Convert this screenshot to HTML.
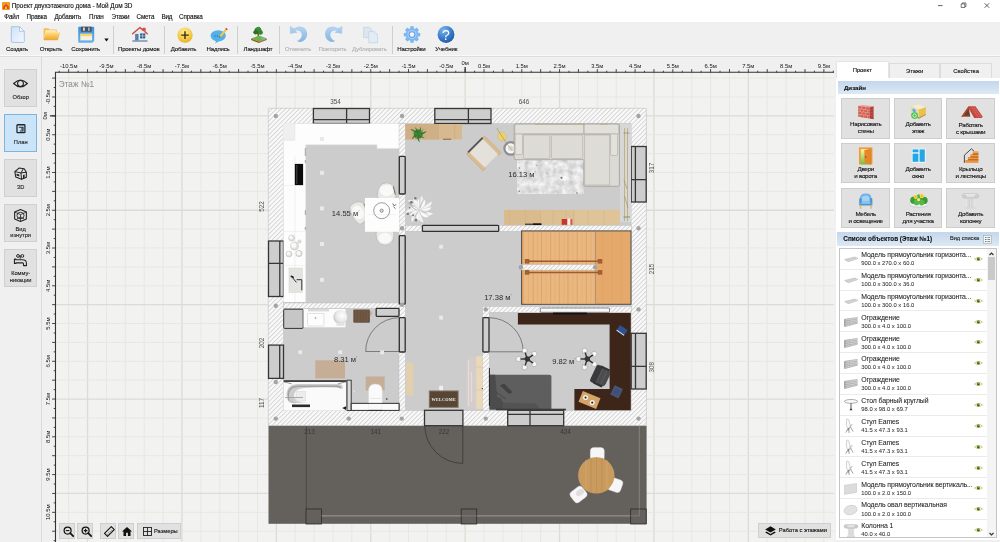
<!DOCTYPE html>
<html lang="ru"><head><meta charset="utf-8"><title>Проект двухэтажного дома - Мой Дом 3D</title>
<style>
*{box-sizing:border-box;margin:0;padding:0}
html,body{width:1000px;height:542px;overflow:hidden;background:#f0f0f0}
body{font-family:"Liberation Sans",sans-serif;color:#1a1a1a;-webkit-text-stroke:0.12px currentColor}
#app{position:relative;width:1000px;height:542px;overflow:hidden;background:transparent;will-change:transform}
#title{position:absolute;left:0;top:0;width:1000px;height:11px;background:#fff}
#title .tt{position:absolute;left:11.8px;top:1.6px;font-size:6.4px;letter-spacing:-0.04px;line-height:8px;color:#111;white-space:nowrap}
#title svg{position:absolute}
#menu{position:absolute;left:0;top:11px;width:1000px;height:11px;background:#fff}
#menu span{position:absolute;top:1.6px;font-size:6.3px;letter-spacing:-0.14px;line-height:8px;color:#111;white-space:nowrap}
#tb{position:absolute;left:0;top:22px;width:1000px;height:35px;background:#f0f0f0}
#tb .ln1{position:absolute;left:0;top:33.4px;width:1000px;height:1px;background:#f9f9f9}
#tb .ln2{position:absolute;left:0;top:34.4px;width:1000px;height:1.2px;background:#dedede}
.tbi{position:absolute;top:0;height:34px;width:0}
.tbi svg{position:absolute;top:3.5px;left:-11px;width:22px;height:19px;overflow:visible}
.tbi span{position:absolute;top:23.3px;left:-30px;width:60px;text-align:center;font-size:6.1px;letter-spacing:-0.17px;line-height:8px;color:#111;white-space:nowrap}
.tbi.dis span{color:#b4b4b4}
.sep{position:absolute;top:3.5px;width:1px;height:28px;background:#cfcfcf}
#left{position:absolute;left:0;top:57px;width:42px;height:485px;background:#f0f0f0;border-right:1px solid #dadada}
.lb{position:absolute;left:4.2px;width:32.7px;height:38.4px;background:#e1e1e1;border:1px solid #d0d0d0}
.lb.on{background:#cce4f7;border-color:#7ab5e3}
.lb svg{position:absolute;left:8.9px;top:7.1px;width:13px;height:13px;overflow:visible}
.lb span{position:absolute;left:-5px;width:41px;text-align:center;font-size:5.7px;line-height:6.6px;color:#222;white-space:nowrap}
.ovb{position:absolute;background:#e1e1e1;border:1px solid #cfcfcf;height:16px}
.ovb svg{position:absolute;overflow:visible}
#right{position:absolute;left:836px;top:57px;width:164px;height:485px;background:#f0f0f0}
.tab{position:absolute;font-size:5.9px;letter-spacing:-0.03px;line-height:8px;text-align:center;color:#111;background:#f0f0f0;border:1px solid #dcdcdc;border-bottom:none}
.tab.on{background:#fff;border-color:#e4e4e4}
#rp{position:absolute;left:0;top:21px;width:164px;height:461.500px;background:#fff}
.hd{position:absolute;left:1.5px;width:161.5px;height:13px;background:linear-gradient(#c3d7ec,#dde8f4);font-weight:bold;font-size:6.15px;line-height:13px;padding-left:6.3px;color:#111;white-space:nowrap}
.db{position:absolute;width:48.6px;height:40.6px;background:#e1e1e1;border:1px solid #cdcdcd}
.db svg{position:absolute;left:14.3px;top:3.5px;width:19px;height:17px;overflow:visible}
.db span{position:absolute;left:-6px;top:22.4px;width:59px;text-align:center;font-size:6.25px;letter-spacing:-0.3px;line-height:6.9px;color:#111;white-space:nowrap}
#list{position:absolute;left:839.3px;top:247.800px;width:157.500px;height:290.600px;background:#fff;border:1px solid #c4c4c4;overflow:hidden}
.it{-webkit-text-stroke:0.06px currentColor;position:relative;height:20.87px;border-bottom:1px solid #ebebeb;width:147px}
.it .t1{position:absolute;left:21px;top:2.3px;font-size:6.9px;letter-spacing:-0.1px;line-height:8px;color:#222;white-space:nowrap}
.it .t2{position:absolute;left:21px;top:10.4px;font-size:5.85px;line-height:8px;color:#333;white-space:nowrap}
.it .th{position:absolute;left:2.5px;top:2.5px;width:16px;height:16px}
.it .th svg{position:absolute;left:0;top:0;width:16px;height:16px;overflow:visible}
.it .ey{position:absolute;left:133.7px;top:6.2px;width:9px;height:8px}
.it .ey svg{position:absolute;left:0;top:0;width:9px;height:8px;overflow:visible}
#sb{position:absolute;left:987.3px;top:248.800px;width:8.700px;height:288.600px;background:#f4f4f4}
#sb i{position:absolute;left:0.4px;width:7.8px;background:#c9c9c9}

</style></head>
<body>
<div id="app">
<div id="title">
<svg style="left:1.5px;top:1.5px" width="8" height="8" viewBox="0 0 8 8"><rect width="8" height="8" rx="1" fill="#f29a1f"/><path d="M1.3 4.6L4 2l2.7 2.6v2.3H1.3z" fill="#d8432a"/><path d="M3.1 6.9V4.6h1.8v2.3z" fill="#f7c948"/></svg>
<div class="tt">Проект двухэтажного дома - Мой Дом 3D</div>
<svg style="left:930px;top:0" width="70" height="11" viewBox="0 0 70 11"><path d="M8 5.6h4.6" stroke="#222" stroke-width="0.7" fill="none"/><path d="M31.2 3.9h3.6v3.6h-3.6zM32.3 3.9v-1h3.6v3.6h-1.1" stroke="#222" stroke-width="0.6" fill="none"/><path d="M54.6 3.2l4.6 4.6M59.2 3.2l-4.6 4.6" stroke="#222" stroke-width="0.7" fill="none"/></svg>
</div>
<div id="menu">
<span style="left:4.300px">Файл</span><span style="left:26.500px">Правка</span><span style="left:54.400px">Добавить</span><span style="left:89px">План</span><span style="left:111.500px">Этажи</span><span style="left:136.500px">Смета</span><span style="left:161.400px">Вид</span><span style="left:179px">Справка</span>
</div>
<div id="tb">
<div class="tbi" style="left:17.1px"><svg viewBox="0 0 22 19" style="left:-10.5px"><defs><linearGradient id="gnew" x1="0" y1="0" x2="1" y2="1"><stop offset="0" stop-color="#cfe0f7"/><stop offset="1" stop-color="#f6faff"/></linearGradient></defs><g transform="translate(-0.300 -0.900)"><path d="M4.6 1.6h8.2l4.8 4.6v10.3q0 .8-.8.8H5.4q-.8 0-.8-.8z" fill="url(#gnew)" stroke="#a3c0e4" stroke-width="0.9"/><path d="M12.8 1.6v4.6h4.8z" fill="#fff" stroke="#9dbbe2" stroke-width="0.8"/></g></svg><span>Создать</span></div>
<div class="tbi" style="left:51.0px"><svg viewBox="0 0 22 19" style="left:-10.0px"><defs><linearGradient id="gop" x1="0" y1="0" x2="0" y2="1"><stop offset="0" stop-color="#fde08a"/><stop offset="1" stop-color="#f0a32a"/></linearGradient></defs><g transform="translate(-0.300 -0.400)"><path d="M2.9 3.4q0-.8.8-.8h4l1.2 1.3h6.300q.8 0 .8.800v2.300H4.500L2.900 14z" fill="#f4bf55"/><path d="M4.600 4.600h10.600v3H4.600z" fill="#fbe9b5"/><path d="M5.400 6.600h13.400q.9 0 .6.900l-2 6.400q-.2.700-1 .7H3.500q-.9 0-.6-.9l1.800-6.400q.2-.7.700-.7z" fill="url(#gop)"/></g></svg><span>Открыть</span></div>
<div class="tbi" style="left:85.7px"><svg viewBox="0 0 22 19" style="left:-10.3px"><defs><linearGradient id="gsv" x1="0" y1="0" x2="0" y2="1"><stop offset="0" stop-color="#3f8fdb"/><stop offset="1" stop-color="#6db0ea"/></linearGradient></defs><g transform="translate(0.700 -0.200)"><path d="M3.400 0.900h14.200q.900 0 .9.900v13.300l-1.800 1.800H3.400q-.9 0-.9-.9V1.800q0-.9.900-.9z" fill="url(#gsv)"/><rect x="5.300" y="0.900" width="10.600" height="5" fill="#4a4f58"/><rect x="7.200" y="1.700" width="2" height="3.300" fill="#c9d4e2"/><rect x="12.400" y="1.700" width="1.600" height="3.300" fill="#aab8cc"/><rect x="4.600" y="8" width="11.800" height="6.600" fill="#f4f1e4"/><rect x="4.600" y="8" width="11.800" height="2.300" fill="#f7d768"/></g></svg><span>Сохранить</span></div>
<svg style="position:absolute;left:103.7px;top:15.5px" width="5" height="4" viewBox="0 0 5 4"><path d="M0.3 0.4h4.4L2.5 3.6z" fill="#111"/></svg>
<div class="sep" style="left:113px"></div>
<div class="tbi" style="left:138.8px"><svg viewBox="0 0 22 19" style="left:-10.0px"><g transform="translate(0.600 -0.500) scale(0.940)"><path d="M4.700 8L11 2.600l6.700 5.400v7.900H4.700z" fill="#e6ebf1"/><path d="M3.200 8.800L11 2.100l3.600 3.100V3.200h1.700v3.500l2.500 2.100" fill="none" stroke="#d6493b" stroke-width="1.600" stroke-linejoin="round" stroke-linecap="round"/><rect x="5.900" y="9" width="3.600" height="6.900" fill="#5a7da3"/><rect x="11.200" y="8.500" width="5.400" height="5.200" fill="#1f5b8e"/><path d="M13.900 8.500v5.200M11.200 11.100h5.400" stroke="#d6e6f3" stroke-width="0.700"/><rect x="2.900" y="15.800" width="16.200" height="1.400" fill="#6985a6"/></g></svg><span>Проекты домов</span></div>
<div class="sep" style="left:164.3px"></div>
<div class="tbi" style="left:183.5px"><svg viewBox="0 0 22 19" style="left:-10.0px"><defs><radialGradient id="gad" cx="0.450" cy="0.300" r="0.800"><stop offset="0" stop-color="#fdeb93"/><stop offset="0.600" stop-color="#f6c940"/><stop offset="1" stop-color="#e09a1c"/></radialGradient></defs><circle cx="11" cy="9.100" r="7.700" fill="url(#gad)"/><path d="M11 5.300v7.600M7.200 9.100h7.600" stroke="#3a2c10" stroke-width="1.400"/></svg><span>Добавить</span></div>
<div class="tbi" style="left:218.1px"><svg viewBox="0 0 22 19" style="left:-10.6px"><ellipse cx="10.200" cy="9.800" rx="7.600" ry="5.600" fill="#51b1e9"/><path d="M8.200 14.400l-1 3 4.400-2.600z" fill="#51b1e9"/><circle cx="7" cy="10" r="0.700" fill="#2d6fa3"/><circle cx="9.400" cy="10" r="0.700" fill="#2d6fa3"/><path d="M11.200 11.700l.7-2.400 5.300-6.400 1.700 1.400-5.400 6.400z" fill="#f5c54a"/><path d="M17.200 2.900l.9-1.100 1.700 1.400-.9 1.100z" fill="#d8393a"/><path d="M11.200 11.700l.5-1.600 1 .9z" fill="#333"/></svg><span>Надпись</span></div>
<div class="sep" style="left:237.2px"></div>
<div class="tbi" style="left:258.0px"><svg viewBox="0 0 22 19" style="left:-10.5px"><g transform="translate(0 0.200) scale(1 0.930)"><circle cx="10" cy="5" r="3.600" fill="#2f7d2b"/><circle cx="7.600" cy="6.600" r="2.300" fill="#2a7127"/><circle cx="12.500" cy="6.800" r="2.400" fill="#37872f"/><circle cx="10.400" cy="2.900" r="2.300" fill="#3c8f35"/><rect x="9.600" y="8" width="1.300" height="4.400" fill="#6b4423"/><path d="M3.200 13.300L11 10.100l7.800 3.200L11 16.500z" fill="#6fb43f"/><path d="M3.200 13.300L11 16.500v1.600L3.200 14.900z" fill="#8a5a2b"/><path d="M18.800 13.300L11 16.500v1.600l7.800-3.200z" fill="#a86f36"/><ellipse cx="14.800" cy="13.200" rx="2" ry="1" fill="#5fb8ea"/></g></svg><span>Ландшафт</span></div>
<div class="sep" style="left:279px"></div>
<div class="tbi dis" style="left:298.0px"><svg viewBox="0 0 22 19" style="left:-10.0px"><defs><linearGradient id="gun" x1="0" y1="0" x2="0" y2="1"><stop offset="0" stop-color="#b9d6f3"/><stop offset="1" stop-color="#86b4e2"/></linearGradient></defs><g transform="translate(-1 -1.800) scale(1.100)"><path d="M2.500 1.300l.3 7.300 7-1.100-2.300-1.600c3.300-1 6 1 6 4 0 2.800-2 4.600-4.300 5.300 1.500.9 3.400 1.300 5.200.300 3.700-2.100 4.800-6.400 3.200-9.800C15.800 2 11.200.800 6.600 3.600z" fill="url(#gun)"/></g></svg><span>Отменить</span></div>
<div class="tbi dis" style="left:332.5px"><svg viewBox="0 0 22 19" style="left:-10.0px"><g transform="translate(21.200 0) scale(-1 1) translate(-1 -1.800) scale(1.100)"><path d="M2.500 1.300l.3 7.300 7-1.100-2.300-1.600c3.300-1 6 1 6 4 0 2.800-2 4.600-4.300 5.300 1.500.9 3.400 1.300 5.200.300 3.700-2.100 4.800-6.400 3.200-9.800C15.800 2 11.200.800 6.600 3.600z" fill="url(#gun)"/></g></svg><span>Повторить</span></div>
<div class="tbi dis" style="left:369.4px"><svg viewBox="0 0 22 19" style="left:-9.8px"><path d="M3.600 1.300h5.800l2.500 2.400v7.900H3.600z" fill="#dbe6f2" stroke="#c0d2e6" stroke-width="0.700"/><path d="M8.800 5.600h5.800l2.900 2.800v8.400H8.800z" fill="#e3ecf5" stroke="#bfd1e6" stroke-width="0.700"/><path d="M14.600 5.600v2.800h2.900z" fill="#f5f8fc" stroke="#bfd1e6" stroke-width="0.500"/></svg><span>Дублировать</span></div>
<div class="sep" style="left:391.8px"></div>
<div class="tbi" style="left:411.4px"><svg viewBox="0 0 22 19" style="left:-10.4px"><g transform="translate(0 -0.700)"><g transform="translate(11 9.300)"><path d="M6.02 -1.86L8.23 -1.67L8.23 1.67L6.02 1.86L5.57 2.94L7.00 4.64L4.64 7.00L2.94 5.57L1.86 6.02L1.67 8.23L-1.67 8.23L-1.86 6.02L-2.94 5.57L-4.64 7.00L-7.00 4.64L-5.57 2.94L-6.02 1.86L-8.23 1.67L-8.23 -1.67L-6.02 -1.86L-5.57 -2.94L-7.00 -4.64L-4.64 -7.00L-2.94 -5.57L-1.86 -6.02L-1.67 -8.23L1.67 -8.23L1.86 -6.02L2.94 -5.57L4.64 -7.00L7.00 -4.64L5.57 -2.94z" fill="#7db7f0"/><circle r="4.600" fill="#a7d0f6"/><circle r="3.400" fill="#5f9fe3"/><circle r="2.300" fill="#f2f6fb"/></g></g></svg><span>Настройки</span></div>
<div class="tbi" style="left:446.2px"><svg viewBox="0 0 22 19" style="left:-10.9px"><defs><radialGradient id="ghl" cx="0.350" cy="0.250" r="0.900"><stop offset="0" stop-color="#7db5ea"/><stop offset="0.500" stop-color="#3b7fcb"/><stop offset="1" stop-color="#174f9a"/></radialGradient></defs><g transform="translate(0 -0.500)"><circle cx="11" cy="9" r="8.400" fill="url(#ghl)"/><text x="11" y="14.300" text-anchor="middle" font-family="Liberation Sans, sans-serif" font-size="14" fill="#fff">?</text></g></svg><span>Учебник</span></div>
<div class="ln1"></div><div class="ln2"></div>
</div>
<div id="left">
<div class="lb" style="top:11.600px"><svg viewBox="0 0 12 12"><path d="M-0.300 6Q6-0.300 12.300 6Q6 12.300-0.300 6z" fill="none" stroke="#222" stroke-width="1"/><circle cx="6" cy="6" r="2.700" fill="none" stroke="#222" stroke-width="1"/></svg><span style="top:24.400px">Обзор</span></div>
<div class="lb on" style="top:56.500px"><svg viewBox="0 0 12 12"><g transform="translate(6.400 6.200) scale(0.780) translate(-6 -6)"><rect x="1.300" y="1.300" width="9.400" height="9.400" rx="0.800" fill="none" stroke="#1d2530" stroke-width="1.500"/><path d="M3.500 4.300h5v4.400h-3.800M6 6.400h2.500" fill="none" stroke="#1d2530" stroke-width="1.200"/></g></svg><span style="top:24.400px">План</span></div>
<div class="lb" style="top:101.500px"><svg viewBox="0 0 12 12"><path d="M0.800 4.200L4.600 1l4.800.600 2 3.200v4.600L7 11.400 1.600 9.200z" fill="none" stroke="#222" stroke-width="1" stroke-linejoin="round"/><path d="M0.800 4.200l5.600 1.300 2.200-3.800M6.400 5.500l.6 5.900M6.400 5.500l5-.700" fill="none" stroke="#222" stroke-width="0.900"/><path d="M8.300 10.600V7.400l1.500-.500v3.200z" fill="#222"/><path d="M2.300 6.200l2.600.700v1.900l-2.600-.900z" fill="#222"/></svg><span style="top:24.400px">3D</span></div>
<div class="lb" style="top:146.500px"><svg viewBox="0 0 12 12" style="top:4px"><path d="M6 0.400l5.400 2.400v6.400L6 11.600.600 9.200V2.800z" fill="none" stroke="#222" stroke-width="1" stroke-linejoin="round"/><path d="M.600 2.800L6 5.200l5.400-2.400M6 5.200v6.400" fill="none" stroke="#222" stroke-width="0.700"/><ellipse cx="6" cy="6" rx="3.300" ry="3" fill="none" stroke="#222" stroke-width="0.800"/><path d="M2.600 9.200l3.400-2 3.400 2" fill="none" stroke="#222" stroke-width="0.700"/></svg><span style="top:21.200px">Вид<br>изнутри</span></div>
<div class="lb" style="top:191.500px"><svg viewBox="0 0 12 12" style="top:4.900px"><circle cx="3.700" cy="1.800" r="1.300" fill="none" stroke="#222" stroke-width="0.900"/><circle cx="7.700" cy="1.800" r="1.300" fill="none" stroke="#222" stroke-width="0.900"/><path d="M5 1.800h1.400M5.700 1.800v2.600" stroke="#222" stroke-width="0.900" fill="none"/><path d="M0.400 4.700h1.300v.600h6.100q3.700 0 3.700 3.400v2h-2.700v-1.600q0-.900-.9-.9H1.700v.600H.400z" fill="none" stroke="#222" stroke-width="1" stroke-linejoin="round"/></svg><span style="top:20.800px">Комму-<br>никации</span></div>
</div>
<svg id="cv" width="794" height="485" viewBox="42 57 794 485" style="position:absolute;left:42px;top:57px">
<defs>
<pattern id="hatch" width="3.200" height="3.200" patternUnits="userSpaceOnUse" patternTransform="rotate(-45)"><rect width="3.200" height="3.200" fill="#f9f9f9"/><line x1="0" y1="0.500" x2="3.200" y2="0.500" stroke="#c0c0c0" stroke-width="0.620"/></pattern>
<linearGradient id="wood1" x1="0" y1="0" x2="0" y2="1"><stop offset="0" stop-color="#e8ae6c"/><stop offset="1" stop-color="#e0a15e"/></linearGradient>
<clipPath id="rugclip"><rect x="517.400" y="159.500" width="68.600" height="34.100"/></clipPath>
<filter id="rugf" x="0" y="0" width="100%" height="100%" color-interpolation-filters="sRGB"><feTurbulence type="fractalNoise" baseFrequency="0.160" numOctaves="3" seed="5"/><feColorMatrix type="matrix" values="0.300 0 0 0 0.735  0.300 0 0 0 0.735  0.300 0 0 0 0.735  0 0 0 0 1"/></filter>
<radialGradient id="boil" cx="0.620" cy="0.400" r="0.750"><stop offset="0" stop-color="#ffffff"/><stop offset="0.550" stop-color="#e9e9e9"/><stop offset="1" stop-color="#b4b4b4"/></radialGradient>
</defs>

<rect x="42" y="57" width="794" height="485" fill="#f0f0f0"/>
<rect x="55.5" y="72.5" width="778.5" height="469.5" fill="#f2f2f1"/>
<g><line x1="68.67" y1="72.5" x2="68.67" y2="542.0" stroke="#e7e7e4" stroke-width="1.0"/><line x1="87.55" y1="72.5" x2="87.55" y2="542.0" stroke="#dcdbd4" stroke-width="1.3"/><line x1="106.43" y1="72.5" x2="106.43" y2="542.0" stroke="#e7e7e4" stroke-width="1.0"/><line x1="125.31" y1="72.5" x2="125.31" y2="542.0" stroke="#e7e7e4" stroke-width="1.0"/><line x1="144.19" y1="72.5" x2="144.19" y2="542.0" stroke="#e7e7e4" stroke-width="1.0"/><line x1="163.07" y1="72.5" x2="163.07" y2="542.0" stroke="#e7e7e4" stroke-width="1.0"/><line x1="181.95" y1="72.5" x2="181.95" y2="542.0" stroke="#dcdbd4" stroke-width="1.3"/><line x1="200.83" y1="72.5" x2="200.83" y2="542.0" stroke="#e7e7e4" stroke-width="1.0"/><line x1="219.71" y1="72.5" x2="219.71" y2="542.0" stroke="#e7e7e4" stroke-width="1.0"/><line x1="238.59" y1="72.5" x2="238.59" y2="542.0" stroke="#e7e7e4" stroke-width="1.0"/><line x1="257.47" y1="72.5" x2="257.47" y2="542.0" stroke="#e7e7e4" stroke-width="1.0"/><line x1="276.35" y1="72.5" x2="276.35" y2="542.0" stroke="#dcdbd4" stroke-width="1.3"/><line x1="295.23" y1="72.5" x2="295.23" y2="542.0" stroke="#e7e7e4" stroke-width="1.0"/><line x1="314.11" y1="72.5" x2="314.11" y2="542.0" stroke="#e7e7e4" stroke-width="1.0"/><line x1="332.99" y1="72.5" x2="332.99" y2="542.0" stroke="#e7e7e4" stroke-width="1.0"/><line x1="351.87" y1="72.5" x2="351.87" y2="542.0" stroke="#e7e7e4" stroke-width="1.0"/><line x1="370.75" y1="72.5" x2="370.75" y2="542.0" stroke="#dcdbd4" stroke-width="1.3"/><line x1="389.63" y1="72.5" x2="389.63" y2="542.0" stroke="#e7e7e4" stroke-width="1.0"/><line x1="408.51" y1="72.5" x2="408.51" y2="542.0" stroke="#e7e7e4" stroke-width="1.0"/><line x1="427.39" y1="72.5" x2="427.39" y2="542.0" stroke="#e7e7e4" stroke-width="1.0"/><line x1="446.27" y1="72.5" x2="446.27" y2="542.0" stroke="#e7e7e4" stroke-width="1.0"/><line x1="465.15" y1="72.5" x2="465.15" y2="542.0" stroke="#dcdbd4" stroke-width="1.3"/><line x1="484.03" y1="72.5" x2="484.03" y2="542.0" stroke="#e7e7e4" stroke-width="1.0"/><line x1="502.91" y1="72.5" x2="502.91" y2="542.0" stroke="#e7e7e4" stroke-width="1.0"/><line x1="521.79" y1="72.5" x2="521.79" y2="542.0" stroke="#e7e7e4" stroke-width="1.0"/><line x1="540.67" y1="72.5" x2="540.67" y2="542.0" stroke="#e7e7e4" stroke-width="1.0"/><line x1="559.55" y1="72.5" x2="559.55" y2="542.0" stroke="#dcdbd4" stroke-width="1.3"/><line x1="578.43" y1="72.5" x2="578.43" y2="542.0" stroke="#e7e7e4" stroke-width="1.0"/><line x1="597.31" y1="72.5" x2="597.31" y2="542.0" stroke="#e7e7e4" stroke-width="1.0"/><line x1="616.19" y1="72.5" x2="616.19" y2="542.0" stroke="#e7e7e4" stroke-width="1.0"/><line x1="635.07" y1="72.5" x2="635.07" y2="542.0" stroke="#e7e7e4" stroke-width="1.0"/><line x1="653.95" y1="72.5" x2="653.95" y2="542.0" stroke="#dcdbd4" stroke-width="1.3"/><line x1="672.83" y1="72.5" x2="672.83" y2="542.0" stroke="#e7e7e4" stroke-width="1.0"/><line x1="691.71" y1="72.5" x2="691.71" y2="542.0" stroke="#e7e7e4" stroke-width="1.0"/><line x1="710.59" y1="72.5" x2="710.59" y2="542.0" stroke="#e7e7e4" stroke-width="1.0"/><line x1="729.47" y1="72.5" x2="729.47" y2="542.0" stroke="#e7e7e4" stroke-width="1.0"/><line x1="748.35" y1="72.5" x2="748.35" y2="542.0" stroke="#dcdbd4" stroke-width="1.3"/><line x1="767.23" y1="72.5" x2="767.23" y2="542.0" stroke="#e7e7e4" stroke-width="1.0"/><line x1="786.11" y1="72.5" x2="786.11" y2="542.0" stroke="#e7e7e4" stroke-width="1.0"/><line x1="804.99" y1="72.5" x2="804.99" y2="542.0" stroke="#e7e7e4" stroke-width="1.0"/><line x1="823.87" y1="72.5" x2="823.87" y2="542.0" stroke="#e7e7e4" stroke-width="1.0"/><line x1="55.5" y1="78.09" x2="834.0" y2="78.09" stroke="#e7e7e4" stroke-width="1.0"/><line x1="55.5" y1="96.97" x2="834.0" y2="96.97" stroke="#e7e7e4" stroke-width="1.0"/><line x1="55.5" y1="115.85" x2="834.0" y2="115.85" stroke="#dcdbd4" stroke-width="1.3"/><line x1="55.5" y1="134.73" x2="834.0" y2="134.73" stroke="#e7e7e4" stroke-width="1.0"/><line x1="55.5" y1="153.61" x2="834.0" y2="153.61" stroke="#e7e7e4" stroke-width="1.0"/><line x1="55.5" y1="172.49" x2="834.0" y2="172.49" stroke="#e7e7e4" stroke-width="1.0"/><line x1="55.5" y1="191.37" x2="834.0" y2="191.37" stroke="#e7e7e4" stroke-width="1.0"/><line x1="55.5" y1="210.25" x2="834.0" y2="210.25" stroke="#dcdbd4" stroke-width="1.3"/><line x1="55.5" y1="229.13" x2="834.0" y2="229.13" stroke="#e7e7e4" stroke-width="1.0"/><line x1="55.5" y1="248.01" x2="834.0" y2="248.01" stroke="#e7e7e4" stroke-width="1.0"/><line x1="55.5" y1="266.89" x2="834.0" y2="266.89" stroke="#e7e7e4" stroke-width="1.0"/><line x1="55.5" y1="285.77" x2="834.0" y2="285.77" stroke="#e7e7e4" stroke-width="1.0"/><line x1="55.5" y1="304.65" x2="834.0" y2="304.65" stroke="#dcdbd4" stroke-width="1.3"/><line x1="55.5" y1="323.53" x2="834.0" y2="323.53" stroke="#e7e7e4" stroke-width="1.0"/><line x1="55.5" y1="342.41" x2="834.0" y2="342.41" stroke="#e7e7e4" stroke-width="1.0"/><line x1="55.5" y1="361.29" x2="834.0" y2="361.29" stroke="#e7e7e4" stroke-width="1.0"/><line x1="55.5" y1="380.17" x2="834.0" y2="380.17" stroke="#e7e7e4" stroke-width="1.0"/><line x1="55.5" y1="399.05" x2="834.0" y2="399.05" stroke="#dcdbd4" stroke-width="1.3"/><line x1="55.5" y1="417.93" x2="834.0" y2="417.93" stroke="#e7e7e4" stroke-width="1.0"/><line x1="55.5" y1="436.81" x2="834.0" y2="436.81" stroke="#e7e7e4" stroke-width="1.0"/><line x1="55.5" y1="455.69" x2="834.0" y2="455.69" stroke="#e7e7e4" stroke-width="1.0"/><line x1="55.5" y1="474.57" x2="834.0" y2="474.57" stroke="#e7e7e4" stroke-width="1.0"/><line x1="55.5" y1="493.45" x2="834.0" y2="493.45" stroke="#dcdbd4" stroke-width="1.3"/><line x1="55.5" y1="512.33" x2="834.0" y2="512.33" stroke="#e7e7e4" stroke-width="1.0"/><line x1="55.5" y1="531.21" x2="834.0" y2="531.21" stroke="#e7e7e4" stroke-width="1.0"/></g>
<g><path d="M55.0 72.3 H834.0 M55.5 72.0 V542.0" stroke="#333" stroke-width="1.1" fill="none"/><path d="M59.23 72.5V70.7M68.67 72.5V69.1M78.11 72.5V70.7M87.55 72.5V69.1M96.99 72.5V70.7M106.43 72.5V69.1M115.87 72.5V70.7M125.31 72.5V69.1M134.75 72.5V70.7M144.19 72.5V69.1M153.63 72.5V70.7M163.07 72.5V69.1M172.51 72.5V70.7M181.95 72.5V69.1M191.39 72.5V70.7M200.83 72.5V69.1M210.27 72.5V70.7M219.71 72.5V69.1M229.15 72.5V70.7M238.59 72.5V69.1M248.03 72.5V70.7M257.47 72.5V69.1M266.91 72.5V70.7M276.35 72.5V69.1M285.79 72.5V70.7M295.23 72.5V69.1M304.67 72.5V70.7M314.11 72.5V69.1M323.55 72.5V70.7M332.99 72.5V69.1M342.43 72.5V70.7M351.87 72.5V69.1M361.31 72.5V70.7M370.75 72.5V69.1M380.19 72.5V70.7M389.63 72.5V69.1M399.07 72.5V70.7M408.51 72.5V69.1M417.95 72.5V70.7M427.39 72.5V69.1M436.83 72.5V70.7M446.27 72.5V69.1M455.71 72.5V70.7M465.15 72.5V69.1M474.59 72.5V70.7M484.03 72.5V69.1M493.47 72.5V70.7M502.91 72.5V69.1M512.35 72.5V70.7M521.79 72.5V69.1M531.23 72.5V70.7M540.67 72.5V69.1M550.11 72.5V70.7M559.55 72.5V69.1M568.99 72.5V70.7M578.43 72.5V69.1M587.87 72.5V70.7M597.31 72.5V69.1M606.75 72.5V70.7M616.19 72.5V69.1M625.63 72.5V70.7M635.07 72.5V69.1M644.51 72.5V70.7M653.95 72.5V69.1M663.39 72.5V70.7M672.83 72.5V69.1M682.27 72.5V70.7M691.71 72.5V69.1M701.15 72.5V70.7M710.59 72.5V69.1M720.03 72.5V70.7M729.47 72.5V69.1M738.91 72.5V70.7M748.35 72.5V69.1M757.79 72.5V70.7M767.23 72.5V69.1M776.67 72.5V70.7M786.11 72.5V69.1M795.55 72.5V70.7M804.99 72.5V69.1M814.43 72.5V70.7M823.87 72.5V69.1M833.31 72.5V70.7M55.5 78.09H52.1M55.5 87.53H53.7M55.5 96.97H52.1M55.5 106.41H53.7M55.5 115.85H52.1M55.5 125.29H53.7M55.5 134.73H52.1M55.5 144.17H53.7M55.5 153.61H52.1M55.5 163.05H53.7M55.5 172.49H52.1M55.5 181.93H53.7M55.5 191.37H52.1M55.5 200.81H53.7M55.5 210.25H52.1M55.5 219.69H53.7M55.5 229.13H52.1M55.5 238.57H53.7M55.5 248.01H52.1M55.5 257.45H53.7M55.5 266.89H52.1M55.5 276.33H53.7M55.5 285.77H52.1M55.5 295.21H53.7M55.5 304.65H52.1M55.5 314.09H53.7M55.5 323.53H52.1M55.5 332.97H53.7M55.5 342.41H52.1M55.5 351.85H53.7M55.5 361.29H52.1M55.5 370.73H53.7M55.5 380.17H52.1M55.5 389.61H53.7M55.5 399.05H52.1M55.5 408.49H53.7M55.5 417.93H52.1M55.5 427.37H53.7M55.5 436.81H52.1M55.5 446.25H53.7M55.5 455.69H52.1M55.5 465.13H53.7M55.5 474.57H52.1M55.5 484.01H53.7M55.5 493.45H52.1M55.5 502.89H53.7M55.5 512.33H52.1M55.5 521.77H53.7M55.5 531.21H52.1M55.5 540.65H53.7" stroke="#333" stroke-width="0.9" fill="none"/><path d="M465.15 72.5V66.9M55.5 115.85H49.9" stroke="#333" stroke-width="1.300" fill="none"/><g font-size="5.9" fill="#161616" font-family="Liberation Sans, sans-serif"><text x="68.7" y="67.9" text-anchor="middle">-10.5м</text><text x="106.4" y="67.9" text-anchor="middle">-9.5м</text><text x="144.2" y="67.9" text-anchor="middle">-8.5м</text><text x="181.9" y="67.9" text-anchor="middle">-7.5м</text><text x="219.7" y="67.9" text-anchor="middle">-6.5м</text><text x="257.5" y="67.9" text-anchor="middle">-5.5м</text><text x="295.2" y="67.9" text-anchor="middle">-4.5м</text><text x="333.0" y="67.9" text-anchor="middle">-3.5м</text><text x="370.8" y="67.9" text-anchor="middle">-2.5м</text><text x="408.5" y="67.9" text-anchor="middle">-1.5м</text><text x="446.3" y="67.9" text-anchor="middle">-0.5м</text><text x="484.0" y="67.9" text-anchor="middle">0.5м</text><text x="521.8" y="67.9" text-anchor="middle">1.5м</text><text x="559.5" y="67.9" text-anchor="middle">2.5м</text><text x="597.3" y="67.9" text-anchor="middle">3.5м</text><text x="635.1" y="67.9" text-anchor="middle">4.5м</text><text x="672.8" y="67.9" text-anchor="middle">5.5м</text><text x="710.6" y="67.9" text-anchor="middle">6.5м</text><text x="748.3" y="67.9" text-anchor="middle">7.5м</text><text x="786.1" y="67.9" text-anchor="middle">8.5м</text><text x="823.9" y="67.9" text-anchor="middle">9.5м</text><text x="465.1" y="65.3" text-anchor="middle">0м</text><text transform="translate(50.2 97.0) rotate(-90)" text-anchor="middle">-0.5м</text><text transform="translate(46.5 115.8) rotate(-90)" text-anchor="middle">0м</text><text transform="translate(50.2 134.7) rotate(-90)" text-anchor="middle">0.5м</text><text transform="translate(50.2 172.5) rotate(-90)" text-anchor="middle">1.5м</text><text transform="translate(50.2 210.2) rotate(-90)" text-anchor="middle">2.5м</text><text transform="translate(50.2 248.0) rotate(-90)" text-anchor="middle">3.5м</text><text transform="translate(50.2 285.8) rotate(-90)" text-anchor="middle">4.5м</text><text transform="translate(50.2 323.5) rotate(-90)" text-anchor="middle">5.5м</text><text transform="translate(50.2 361.3) rotate(-90)" text-anchor="middle">6.5м</text><text transform="translate(50.2 399.0) rotate(-90)" text-anchor="middle">7.5м</text><text transform="translate(50.2 436.8) rotate(-90)" text-anchor="middle">8.5м</text><text transform="translate(50.2 474.6) rotate(-90)" text-anchor="middle">9.5м</text><text transform="translate(50.2 512.3) rotate(-90)" text-anchor="middle">10.5м</text></g></g>
<text x="58.8" y="87.2" font-size="8.2" fill="#8a8a8a" font-family="Liberation Sans, sans-serif">Этаж №1</text>
<g id="plan" font-family="Liberation Sans, sans-serif">
<!-- terrace -->
<rect x="268.500" y="425.600" width="378.100" height="98.200" fill="#64605c"/>
<!-- floor -->
<rect x="283.500" y="123.500" width="347.700" height="287" fill="#cccccc"/>
<!-- outer walls -->
<path d="M268.300 108.300H646.400V425.600H268.300zM283.500 123.500V410.500H631.200V123.500z" fill="url(#hatch)" fill-rule="evenodd" stroke="#b4b4b4" stroke-width="0.500"/>
<!-- interior walls -->
<g fill="url(#hatch)" stroke="#b9b9b9" stroke-width="0.400">
<rect x="399" y="123.500" width="6.400" height="287"/>
<rect x="283.500" y="303" width="115.500" height="5.400"/>
<rect x="405.400" y="225.400" width="225.800" height="5.800"/>
<rect x="482.600" y="306.500" width="148.600" height="5.800"/>
<rect x="482.600" y="306.500" width="6.700" height="104"/>
<rect x="521.300" y="264.600" width="74.100" height="5.400"/>
</g>

<!-- windows -->
<g fill="#cdcdcd" stroke="#363636" stroke-width="1.300">
<rect x="313.400" y="108.500" width="56.100" height="15"/><path d="M346.600 108.500v15M313.400 119.700h56.100" fill="none"/>
<rect x="434.800" y="108.500" width="56.200" height="15"/><path d="M468.400 108.500v15M434.800 119.700h56.200" fill="none"/>
<rect x="268.500" y="241" width="15" height="55.500"/><path d="M268.500 263.300h15M279.800 241v55.500" fill="none"/>
<rect x="268.500" y="345.100" width="15" height="33.300"/><path d="M279.700 345.100v33.300" fill="none"/>
<rect x="631.200" y="146.500" width="15" height="55.500"/><path d="M631.200 179.600h15M635.400 146.500v55.500" fill="none"/>
<rect x="631.200" y="333.300" width="15" height="55.700"/><path d="M631.200 366.400h15M635.500 333.300v55.700" fill="none"/>
<rect x="507.700" y="410.300" width="56" height="15.400"/><path d="M530 410.300v15.400M507.700 414.400h56" fill="none"/>
<rect x="424.500" y="410.300" width="38.400" height="15.400"/>
</g>
<!-- interior doors -->
<g fill="#cfcfcf" stroke="#2f2f2f" stroke-width="1.300">
<rect x="399.300" y="156.400" width="5.900" height="37.600" rx="0.800"/>
<rect x="399.300" y="235.600" width="5.900" height="68.600" rx="0.800"/>
<rect x="399.300" y="317.700" width="5.900" height="34.300" rx="0.800"/>
<rect x="482.900" y="317.700" width="6.100" height="34.300" rx="0.800"/>
<rect x="422.400" y="225.300" width="76.300" height="6.100" rx="1"/>
<rect x="376.200" y="308.300" width="22.800" height="8" rx="0.800"/>
</g>
<rect x="540.300" y="308" width="69.200" height="4.300" rx="0.600" fill="#fafafa" stroke="#555" stroke-width="0.700"/>
<!-- door arcs -->
<g fill="none" stroke="#444" stroke-width="0.600">
<path d="M399 317.700A33.500 33.500 0 0 0 365.700 351.500H399"/>
<path d="M489.300 317.700A34 34 0 0 1 523.200 351.800H489.300"/>
<path d="M424.800 425.800A38 38 0 0 0 462.800 463.400V425.800" stroke="#2a2a2a"/>
</g>
<!-- wall nodes -->
<g fill="#a4a4a4">
<circle cx="275.800" cy="116" r="2.200"/><circle cx="402" cy="116" r="2.200"/><circle cx="638.500" cy="116" r="2.200"/>
<circle cx="275.800" cy="305.800" r="2.200"/><circle cx="402" cy="228.300" r="2.200"/><circle cx="402" cy="304.800" r="2.200"/>
<circle cx="638.500" cy="228.300" r="2.200"/><circle cx="638.500" cy="309.400" r="2.200"/>
<circle cx="275.800" cy="382" r="2.200"/><circle cx="275.800" cy="418.600" r="2.200"/><circle cx="348.700" cy="418.600" r="2.200"/><circle cx="401.700" cy="418.600" r="2.200"/>
<circle cx="485.800" cy="418.600" r="2.200"/><circle cx="638.500" cy="418.600" r="2.200"/><circle cx="485.800" cy="309.400" r="2.200"/>
<circle cx="521" cy="267.300" r="2.200"/><circle cx="595" cy="267.300" r="2.200"/>
</g>
<!-- dimensions -->
<g font-size="6.300" fill="#505050" text-anchor="middle">
<text x="335.400" y="104">354</text><text x="524" y="104">646</text>
<text transform="translate(264 206.500) rotate(-90)">522</text>
<text transform="translate(264 343) rotate(-90)">202</text>
<text transform="translate(264 403) rotate(-90)">117</text>
<text transform="translate(654 168) rotate(-90)">317</text>
<text transform="translate(654 269) rotate(-90)">215</text>
<text transform="translate(654 367.300) rotate(-90)">308</text>
<g fill="#383735"><text x="309.400" y="433.600">213</text><text x="375.800" y="433.600">141</text><text x="443.900" y="433.600">222</text><text x="565.500" y="433.600">424</text></g>
</g>
<!-- ===== kitchen ===== -->
<path d="M283.500 123.500H398.800V148.400H377V144.800H305.600V302H283.500z" fill="#fdfdfd"/>
<path d="M305.600 144.800H377V148.400H398.800" fill="none" stroke="#e3e3e3" stroke-width="0.500"/>
<rect x="283.500" y="123.500" width="11.300" height="16.800" fill="#efefef"/>
<path d="M283.500 140.300h11.300v-16.800" fill="none" stroke="#dedede" stroke-width="0.500"/>
<path d="M294.900 156V302" stroke="#e4e4e4" stroke-width="0.500"/>
<path d="M283.500 185.500h22M283.500 231.400h22M283.500 265.400h22" stroke="#e6e6e6" stroke-width="0.500"/>
<rect x="294.800" y="163.900" width="8.300" height="21.200" fill="#0b0b0b"/>
<path d="M296.800 165v19" stroke="#888" stroke-width="0.500"/>
<path d="M305.300 148v8M305.300 210v5M305.300 227v3M305.300 160v3" stroke="#555" stroke-width="0.500"/>
<!-- hob -->
<g fill="#e1e1de" stroke="#b9b9b6" stroke-width="0.500">
<circle cx="291.600" cy="238" r="3"/><circle cx="294.500" cy="246" r="4"/><circle cx="289" cy="254" r="3"/><circle cx="299" cy="253.500" r="3.200"/><circle cx="299.500" cy="241.500" r="1.600"/>
</g>
<g fill="#f8f8f6"><circle cx="291" cy="237.400" r="1.800"/><circle cx="293.700" cy="245.200" r="2.600"/><circle cx="288.500" cy="253.400" r="1.800"/><circle cx="298.400" cy="252.900" r="2"/></g>
<!-- sink -->
<rect x="289" y="268" width="13.300" height="24.300" fill="#e3e3df" stroke="#d2d2ce" stroke-width="0.500"/>
<path d="M291.800 276.800l4.600 5.600M296.600 279.700h5.200v10.600" fill="none" stroke="#333" stroke-width="1"/><path d="M291.300 276.300l1.800 1" stroke="#222" stroke-width="1.600" stroke-linecap="round"/>
<!-- ceiling lights -->
<g fill="#e9e9e9"><rect x="320" y="137" width="4" height="4"/><rect x="320" y="170.800" width="4" height="4"/><rect x="320" y="206.400" width="4" height="4"/><rect x="320" y="242" width="4" height="4"/><rect x="320" y="277.900" width="4" height="4"/>
<rect x="439.200" y="244.800" width="3.800" height="3.800"/><rect x="439.200" y="315.800" width="3.800" height="3.800"/><rect x="439.200" y="386.200" width="3.800" height="3.800"/>
<rect x="298.300" y="350.300" width="3.800" height="3.800"/><rect x="338.300" y="350.300" width="3.800" height="3.800"/><rect x="380.200" y="350.500" width="3.800" height="3.800"/></g>
<!-- dining chairs -->
<g fill="#e9e9e6" stroke="#b4b4b1" stroke-width="0.700">
<path d="M377.300 196Q377.300 183 386.700 182.800Q396 183 396 196Q395.500 200 386.600 200Q377.800 200 377.300 196z"/>
<path d="M376 233.500Q376 245 385 245.200Q394 245 394 233.500Q393.500 229.500 385 229.500Q376.500 229.500 376 233.500z"/>
<path d="M349.600 207Q355.500 199.500 362.500 202.500L367.800 213Q368.300 220.500 360 224.500Q355.500 222.500 352.500 216.500Q350 211.500 349.600 207z"/>
</g>
<g fill="#f9f9f7"><ellipse cx="386.600" cy="190.500" rx="6.800" ry="5.700"/><ellipse cx="385" cy="238" rx="6.600" ry="5.300"/><ellipse cx="358" cy="212.500" rx="5.400" ry="7" transform="rotate(-30 358 212.500)"/></g>
<path d="M393.300 186.500l2 8M364.500 204.300l2.500 4.500" stroke="#4a4a4a" stroke-width="0.800" fill="none"/>
<!-- dining table -->
<rect x="365" y="197.900" width="34" height="33.900" fill="#fdfdfd"/>
<path d="M368 214.600h28" stroke="#e6e6e6" stroke-width="0.500"/>
<circle cx="381.700" cy="210.700" r="8" fill="none" stroke="#3c3c3c" stroke-width="0.500"/>
<circle cx="381.700" cy="210.700" r="1.600" fill="#ddd" stroke="#444" stroke-width="0.500"/>
<path d="M392.700 203.500l1.600 2.500 1.800-1.800M393.500 206.800l2 1.800" stroke="#333" stroke-width="0.700" fill="none"/>
<!-- ===== living ===== -->
<rect x="405.400" y="124" width="56.500" height="15.500" fill="#d6b98f"/>
<rect x="405.400" y="124" width="33.100" height="15.500" fill="#cfb086"/>
<path d="M438.500 124v15.500M454.700 124v15.500" stroke="#c6a67b" stroke-width="0.500"/>
<rect x="443" y="138.700" width="8.300" height="1.100" fill="#8e6d45"/>
<!-- green plant -->
<g transform="translate(418.200 134)">
<circle r="4.600" fill="#2c6e2a" opacity="0.850"/>
<g fill="#2f7a2c"><path d="M0 0L-8 -4.500Q-4.500 -5.500 0 0z"/><path d="M0 0L-6.500 5.500Q-5.500 1 0 0z"/><path d="M0 0L1.500 8.500Q-2 5 0 0z"/><path d="M0 0L8.500 -3Q5.500 1.500 0 0z"/><path d="M0 0L2.500 -7.500Q3.500 -3 0 0z"/><path d="M0 0L-3.500 -7Q0 -5 0 0z"/><path d="M0 0L6.500 4Q2.500 4.500 0 0z"/></g>
<g fill="#4c9e3f"><path d="M0 0L-6.500 -1Q-3 -2.500 0 0z"/><path d="M0 0L-2.500 6.500Q-2.500 2.500 0 0z"/><path d="M0 0L5.500 -5.500Q4 -1 0 0z"/><path d="M0 0L5.500 1.500Q2.500 2 0 0z"/></g>
</g>
<!-- armchair -->
<g transform="translate(483.400 153) rotate(45)">
<rect x="-11.500" y="-12.800" width="24" height="3.600" rx="1" fill="#dcbb8c" stroke="#b99868" stroke-width="0.400"/>
<rect x="-11.500" y="9.200" width="24" height="3.600" rx="1" fill="#dcbb8c" stroke="#b99868" stroke-width="0.400"/>
<rect x="-10.500" y="-9.600" width="22" height="19.200" rx="1.500" fill="#e4e1db" stroke="#c9c5bd" stroke-width="0.500"/>
<rect x="-12.300" y="-10.500" width="2" height="21" rx="0.800" fill="#5a5550"/>
</g>
<!-- lamp + side table -->
<circle cx="502" cy="136.500" r="4.400" fill="#ead077" stroke="#cdb05a" stroke-width="0.400"/>
<path d="M496.600 128L511.200 150.500" stroke="#b99a3f" stroke-width="0.700"/>
<circle cx="510.700" cy="148.400" r="6.300" fill="#f8f8f8" stroke="#8f8f8f" stroke-width="2.200"/>
<circle cx="510.700" cy="148.400" r="2.800" fill="#dcdcdc"/>
<path d="M507 144l5.500 6.500" stroke="#a88f3f" stroke-width="0.600"/>
<!-- rug -->
<rect x="517.600" y="159.800" width="66.200" height="33.900" fill="#e6e6e6" filter="url(#rugf)"/>
<g fill="#7a7a7a"><circle cx="561.500" cy="177.800" r="1.100"/><circle cx="519.300" cy="191.300" r="0.700"/><circle cx="577" cy="193" r="0.800"/><circle cx="519.500" cy="168" r="0.700"/><circle cx="547" cy="173" r="0.600"/><circle cx="537" cy="165.500" r="0.600"/></g>
<!-- sofa -->
<g>
<path d="M516 124h102q1.400 0 1.400 1.500V184.800q0 1.500-1.500 1.500H585.300q-1.500 0-1.500-1.500V159.700H516q-1.800 0-1.800-1.600V125.600q0-1.600 1.800-1.600z" fill="#dcdad5" stroke="#9a968e" stroke-width="0.700"/>
<path d="M514.800 125.800q0-1.600 2-1.600h66.700v9.800H514.800z" fill="#e2e0dc" stroke="#a29e96" stroke-width="0.500"/>
<path d="M584.300 124.200h32.500q2 0 2 1.600v8.200H584.300z" fill="#e2e0dc" stroke="#a29e96" stroke-width="0.500"/>
<rect x="515.200" y="134" width="7.300" height="20.500" rx="1.300" fill="#e3e1dc" stroke="#a29e96" stroke-width="0.500"/>
<rect x="610.600" y="134" width="7" height="21.500" rx="1.300" fill="#e3e1dc" stroke="#a29e96" stroke-width="0.500"/>
<rect x="523.500" y="135" width="26.300" height="23.500" rx="1.200" fill="#dddbd6" stroke="#a8a49c" stroke-width="0.500"/>
<rect x="551.400" y="135" width="31.300" height="23.500" rx="1.200" fill="#dddbd6" stroke="#a8a49c" stroke-width="0.500"/>
<path d="M584.600 135h25v50h-25z" fill="#dedcd7" stroke="#a8a49c" stroke-width="0.500"/>
<path d="M522.500 134h88" stroke="#aaa69e" stroke-width="0.700"/>
<path d="M535 124.300h50M600 124.300h8" stroke="#b8a26b" stroke-width="0.600"/>
</g>
<!-- curtain/shelf right -->
<rect x="620" y="124" width="11" height="98" fill="#d7d7d7"/>
<g stroke="#bfab80" stroke-width="0.900" fill="none"><path d="M624.500 128V221M627.500 128V221"/><path d="M623.500 133h6" stroke="#a8935f"/><path d="M623.500 217h6.500" stroke="#7f9a55" stroke-width="1"/></g>
<path d="M624.500 196l3.500 12M624 180l3 9" stroke="#8a9a62" stroke-width="0.600"/>
<!-- tv cabinet -->
<rect x="504.100" y="209.900" width="115.400" height="14.900" fill="#dcc094"/>
<rect x="504.100" y="209.900" width="36.600" height="14.900" fill="#d9bb8d"/>
<rect x="573.900" y="209.900" width="45.600" height="14.900" fill="#dec498"/>
<path d="M509.500 210v14.800M525.500 210v14.800M540.700 210v14.800M573.900 210v14.800M588 210v14.800M604 210v14.800M553 210v14.800M566 210v14.800" stroke="#cfb182" stroke-width="0.500"/>
<rect x="561.700" y="219" width="5.500" height="5.800" fill="#c8352f"/>
<rect x="567.600" y="218.600" width="2.400" height="6.200" fill="#f3f3f3"/><rect x="570.500" y="219.200" width="1.900" height="5.600" fill="#d55"/>
<rect x="525" y="223.600" width="16" height="1.300" fill="#4a3a28"/><rect x="533" y="223.400" width="8.500" height="1.600" fill="#151515"/>
<!-- white plant -->
<g transform="translate(419 210) scale(1.180)">
<g fill="#f4f4f4" stroke="#bdbdbd" stroke-width="0.400">
<path d="M0 0L-10 -8Q-3 -12 0 0z"/><path d="M0 0L-12.500 3Q-9 -4 0 0z"/><path d="M0 0L-6 11.500Q-9 4 0 0z"/><path d="M0 0L4.500 11Q-3 10 0 0z"/><path d="M0 0L12.500 2.500Q8 9 0 0z"/><path d="M0 0L11 -8Q12 -1 0 0z"/><path d="M0 0L1.500 -13Q7 -8 0 0z"/><path d="M0 0L-4.500 -12.500Q-7 -5 0 0z"/>
</g>
<g fill="#fbfbfb" stroke="#cfcfcf" stroke-width="0.300" transform="rotate(22)">
<path d="M0 0L-8 -6Q-2 -9 0 0z"/><path d="M0 0L-10 2.500Q-7 -3 0 0z"/><path d="M0 0L-5 9Q-7 3 0 0z"/><path d="M0 0L3.500 9Q-2 8 0 0z"/><path d="M0 0L10 2Q6 7 0 0z"/><path d="M0 0L9 -6.500Q9.500 -1 0 0z"/><path d="M0 0L1 -10.500Q5.500 -6.500 0 0z"/><path d="M0 0L-3.500 -10Q-5.500 -4 0 0z"/>
</g>
<g fill="#7d7d7d"><circle cx="-6.500" cy="-6.500" r="1.300"/><circle cx="-3.200" cy="-10" r="1.100"/><circle cx="-9.500" cy="3.300" r="1"/><circle cx="-2.500" cy="8.600" r="1.100"/><circle cx="-8" cy="-2" r="0.800"/><circle cx="-5" cy="4.500" r="0.900"/></g>
<path d="M-7 -3l5 3M-4 6l3-4M3 -8l-2 6M7 3l-5-2M-9 -6l4 3M-8 6l4-3" stroke="#999" stroke-width="0.500" fill="none"/>
</g>
<!-- ===== stairs ===== -->
<rect x="521.600" y="230.900" width="109.400" height="73.400" fill="#e5aa6b" stroke="#4a4a4a" stroke-width="1"/>
<rect x="524" y="232" width="71.400" height="71.500" fill="#e9b77f"/>
<path d="M533.200 232v71.500M541.500 232v71.500M550.600 232v71.500M559.400 232v71.500M568 232v71.500M577.200 232v71.500M586.300 232v71.500" stroke="#cf9a5f" stroke-width="0.600"/>
<path d="M528.600 232v71.500M546 232v71.500M564 232v71.500M582 232v71.500M537.500 232v71.500M555 232v71.500M572.800 232v71.500M591 232v71.500" stroke="#e0a96e" stroke-width="0.500"/>
<path d="M595.400 232v71.500" stroke="#8a7a6a" stroke-width="0.600"/>
<path d="M603 232v72M612 232v72M621 232v72" stroke="#dc9d5c" stroke-width="0.600"/>
<rect x="521.300" y="264.600" width="74.100" height="5.400" fill="url(#hatch)" stroke="#b9b9b9" stroke-width="0.400"/>
<circle cx="521" cy="267.300" r="2.200" fill="#a4a4a4"/><circle cx="595" cy="267.300" r="2.200" fill="#a4a4a4"/>
<g stroke="#a05a30" stroke-width="1.500" fill="#b06a3c"><path d="M527 261.300h73.500M527 272.400h73.500" fill="none"/><rect x="525.600" y="259.800" width="3" height="3"/><rect x="598.500" y="259.800" width="3" height="3"/><rect x="525.600" y="270.900" width="3" height="3"/><rect x="598.500" y="270.900" width="3" height="3"/></g>
<!-- ===== office ===== -->
<path d="M517.900 313.100H630.800V410.300H574.400V389H609.600V324.400H517.900z" fill="#3d2619"/>
<rect x="553" y="312.600" width="34" height="1.800" fill="#111"/>
<g transform="translate(622 330.300) rotate(35)"><rect x="-4.600" y="-3.200" width="9.200" height="6.400" fill="#2c5293"/><rect x="-4.600" y="2.400" width="9.200" height="1" fill="#e9e9e9"/></g>
<g transform="translate(616.600 391.800) rotate(25)"><rect x="-4.600" y="-5.200" width="9.200" height="10.400" fill="#4a5473"/><rect x="-2.800" y="-3" width="5.600" height="6" fill="#3d4f80"/></g>
<g transform="translate(589.500 400) rotate(22)"><rect x="-9.500" y="-5.800" width="19" height="11.600" fill="#d3a568"/><circle cx="-4.600" cy="-0.800" r="2.500" fill="#f6f6f6"/><circle cx="-4.600" cy="-0.800" r="1.100" fill="#3a2a1a"/><circle cx="3.500" cy="1.400" r="2.500" fill="#f6f6f6"/><circle cx="3.500" cy="1.400" r="1.100" fill="#3a2a1a"/></g>
<!-- office chair -->
<g transform="translate(601.500 376.500) rotate(25)"><rect x="-8" y="-8.500" width="15" height="17" rx="3.500" fill="#4b4b4e"/><rect x="-9" y="-9.500" width="6" height="19" rx="2.500" fill="#3a3a3d"/><path d="M-2 -7v14M2.500 -7.500v15" stroke="#5d5d61" stroke-width="0.800"/><rect x="-5" y="-10" width="10" height="2.200" rx="1" fill="#333"/><rect x="-5" y="7.800" width="10" height="2.200" rx="1" fill="#333"/></g>
<!-- dark sofa -->
<path d="M489.600 374.800h60q1.800 0 1.800 1.800v33h-61.800z" fill="#5e5e5e"/>
<path d="M489.600 374.800h5.500l2 22 4 1.500 1.500 4 8 2.500v4.800h-21z" fill="#4c4c4c"/>
<path d="M503 402.500l30 1q5 .300 5.500 3.500v2.600h-35.500z" fill="#535353"/>
<path d="M500 385.500l9 8.500 3.500-1.800-8.500-8.700z" fill="#424242"/>
<path d="M496 392l10 7" stroke="#474747" stroke-width="1"/>
<rect x="496" y="408.700" width="70" height="1.600" fill="#3a3a3a"/>
<path d="M489.400 368v38" stroke="#222" stroke-width="1"/>
<!-- chandeliers -->
<g transform="translate(527.3 359.0) rotate(-18)"><g transform="rotate(0)"><path d="M0 0L0 -7" stroke="#2e2e2e" stroke-width="1.400"/><path d="M-1.700 -11h3.400l1.100 4h-5.600z" fill="#f9f9f9" stroke="#8a8a8a" stroke-width="0.400"/></g><g transform="rotate(72)"><path d="M0 0L0 -7" stroke="#2e2e2e" stroke-width="1.400"/><path d="M-1.700 -11h3.400l1.100 4h-5.600z" fill="#f9f9f9" stroke="#8a8a8a" stroke-width="0.400"/></g><g transform="rotate(144)"><path d="M0 0L0 -7" stroke="#2e2e2e" stroke-width="1.400"/><path d="M-1.700 -11h3.400l1.100 4h-5.600z" fill="#f9f9f9" stroke="#8a8a8a" stroke-width="0.400"/></g><g transform="rotate(216)"><path d="M0 0L0 -7" stroke="#2e2e2e" stroke-width="1.400"/><path d="M-1.700 -11h3.400l1.100 4h-5.600z" fill="#f9f9f9" stroke="#8a8a8a" stroke-width="0.400"/></g><g transform="rotate(288)"><path d="M0 0L0 -7" stroke="#2e2e2e" stroke-width="1.400"/><path d="M-1.700 -11h3.400l1.100 4h-5.600z" fill="#f9f9f9" stroke="#8a8a8a" stroke-width="0.400"/></g><circle r="2.700" fill="#353535"/></g>
<g transform="translate(587.3 359.0) rotate(-18)"><g transform="rotate(0)"><path d="M0 0L0 -7" stroke="#2e2e2e" stroke-width="1.400"/><path d="M-1.700 -11h3.400l1.100 4h-5.600z" fill="#f9f9f9" stroke="#8a8a8a" stroke-width="0.400"/></g><g transform="rotate(72)"><path d="M0 0L0 -7" stroke="#2e2e2e" stroke-width="1.400"/><path d="M-1.700 -11h3.400l1.100 4h-5.600z" fill="#f9f9f9" stroke="#8a8a8a" stroke-width="0.400"/></g><g transform="rotate(144)"><path d="M0 0L0 -7" stroke="#2e2e2e" stroke-width="1.400"/><path d="M-1.700 -11h3.400l1.100 4h-5.600z" fill="#f9f9f9" stroke="#8a8a8a" stroke-width="0.400"/></g><g transform="rotate(216)"><path d="M0 0L0 -7" stroke="#2e2e2e" stroke-width="1.400"/><path d="M-1.700 -11h3.400l1.100 4h-5.600z" fill="#f9f9f9" stroke="#8a8a8a" stroke-width="0.400"/></g><g transform="rotate(288)"><path d="M0 0L0 -7" stroke="#2e2e2e" stroke-width="1.400"/><path d="M-1.700 -11h3.400l1.100 4h-5.600z" fill="#f9f9f9" stroke="#8a8a8a" stroke-width="0.400"/></g><circle r="2.700" fill="#353535"/></g>
<!-- ===== hall ===== -->
<rect x="406" y="362.700" width="7.600" height="32.800" rx="1.500" fill="#e2cfb0"/>
<rect x="466.600" y="356.800" width="9.600" height="52" fill="#d5cdcb"/>
<path d="M468.500 360v46M471.500 372v30" stroke="#e3dcda" stroke-width="1.200"/>
<rect x="476.200" y="356.200" width="6.400" height="52.800" fill="#ead9b8"/>
<path d="M476.200 367h6.400M476.200 390h6.400" stroke="#cdbb98" stroke-width="0.500"/>
<circle cx="482.300" cy="388.600" r="0.700" fill="#333"/>
<rect x="428.800" y="390.400" width="29.900" height="17.500" fill="#8a7a68"/>
<rect x="429.800" y="391.400" width="27.900" height="15.500" fill="#574536"/>
<text x="443.800" y="400.800" text-anchor="middle" font-family="Liberation Serif, serif" font-weight="bold" font-size="4.200" fill="#f3efe8" letter-spacing="0.250">WELCOME</text>
<rect x="439.400" y="385.800" width="3.600" height="4.400" fill="#eee"/>
<!-- ===== bath ===== -->
<rect x="283.700" y="309.200" width="19.500" height="19.200" rx="1" fill="#c6c6c6" stroke="#333" stroke-width="1"/>
<rect x="303.500" y="309" width="42" height="18.300" fill="#fcfcfc"/>
<rect x="308" y="309" width="21" height="2.400" fill="#dadada"/>
<path d="M307.500 313.500h16.500v11q0 1.500-1.500 1.500h-13.500q-1.500 0-1.500-1.500z" fill="#fdfdfd" stroke="#d0d0d0" stroke-width="0.600"/>
<path d="M315.500 316.500v2.500M314.300 318.200h2.400" stroke="#999" stroke-width="0.500"/>
<circle cx="340.300" cy="317" r="7" fill="url(#boil)"/>
<rect x="336.500" y="322.500" width="8" height="3.300" fill="#e2e2e2"/>
<rect x="353.300" y="309.400" width="16.600" height="13.300" rx="1" fill="#6a5240"/>
<path d="M356 310v12M359 310v12M362 310v12M365 310v12M367.600 310v12" stroke="#7b624e" stroke-width="0.700"/>
<path d="M370.800 311v5M369.600 313.400h2.600" stroke="#a08a70" stroke-width="0.500"/>
<rect x="315.300" y="360.300" width="29.700" height="18.100" fill="#c5ae95"/>
<rect x="365.700" y="376.500" width="19" height="14" fill="#c5ae95"/>
<!-- bathtub -->
<rect x="283.600" y="380.200" width="67.400" height="30.400" fill="#fafafa"/>
<path d="M286.500 395q0-11 12-11h40q4.500 0 4.500 4v.500q-14-2-38-.500-11 1-11 7t8 7.500l6 .500H292q-5.500-1-5.500-8z" fill="#cdcdcd"/>
<path d="M288.300 395q0-8.800 10.700-8.800h38q3.500 0 3.500 2.300" fill="none" stroke="#a2a2a2" stroke-width="1.500"/>
<path d="M288.300 395q0 7.500 7 8" fill="none" stroke="#bdbdbd" stroke-width="1.200"/>
<rect x="283.600" y="380.200" width="63" height="1.700" fill="#2c2c2c"/>
<path d="M283.600 381.800l8 2M346 381.800l-8 2" stroke="#555" stroke-width="0.600"/>
<rect x="347" y="380.200" width="4.200" height="30.400" fill="#dcdcdc" stroke="#2f2f2f" stroke-width="0.900"/>
<path d="M346.600 382v26.500" stroke="#555" stroke-width="0.600"/>
<path d="M342.200 408l3.800-1.800v3.800z" fill="#1c1c1c"/>
<rect x="292" y="404.500" width="18" height="2.600" fill="#2b2b2b"/>
<rect x="296" y="391.500" width="9.500" height="9.500" fill="#ececec" stroke="#cfcfcf" stroke-width="0.400"/>
<path d="M285 397.500h18M288.500 394.500v6" stroke="#9a9a9a" stroke-width="0.800"/>
<!-- shelf + toilet -->
<rect x="351.300" y="403.400" width="47.700" height="7" fill="#fbfbfb" stroke="#2f2f2f" stroke-width="0.900"/>
<path d="M368.500 391q0-7 6.900-7t6.900 7v18.600h-13.800z" fill="#fafafa" stroke="#d6d6d6" stroke-width="0.500"/>
<path d="M370 398.500h10.800" stroke="#dcdcdc" stroke-width="0.600"/>
<rect x="351.300" y="403.400" width="17.200" height="7" fill="#fbfbfb"/><rect x="382.300" y="403.400" width="16.700" height="7" fill="#fbfbfb"/>
<path d="M351.300 403.400h47.700v7h-47.700z" fill="none" stroke="#2f2f2f" stroke-width="0.900"/>
<circle cx="386.800" cy="399" r="0.800" fill="#222"/>
<path d="M353.500 390.500l1.400 1.800" stroke="#eee" stroke-width="1"/>
<!-- ===== terrace ===== -->
<path d="M306.400 426V509" stroke="#3a3a38" stroke-width="0.600"/>
<path d="M321.400 515.900H630.600" stroke="#a6a6a3" stroke-width="0.900"/>
<path d="M639.300 426V509" stroke="#8d8d8a" stroke-width="0.800"/>
<g fill="#64605c" stroke="#2a2a29" stroke-width="0.800"><rect x="306" y="509" width="15.400" height="15"/><rect x="461.200" y="509" width="15.500" height="15"/><rect x="630.700" y="509" width="15.500" height="15"/></g>
<path d="M321.400 515.900h2M461.200 515.900h15.500M630.700 515.900h9M639.300 509v7" stroke="#8a8a87" stroke-width="0.700"/>
<g fill="#f6f6f6" stroke="#d9d9d9" stroke-width="0.400">
<rect x="590.300" y="447.600" width="14" height="13" rx="3.500"/>
<rect x="-7" y="-6.500" width="14" height="13" rx="3.500" transform="translate(615 485) rotate(20)"/>
<rect x="-7.500" y="-6.500" width="15" height="13" rx="3.500" transform="translate(578.500 494.500) rotate(-38)"/>
</g>
<ellipse cx="580" cy="492.500" rx="4.500" ry="3" fill="#dedede" transform="rotate(-38 580 492.500)"/>
<circle cx="596.300" cy="475.400" r="18.200" fill="#c99b5e"/>
<path d="M591 458v35M596.500 457.200v36.400M602 458v35" stroke="#bd8e51" stroke-width="0.800"/>
<path d="M586 460.500v30M607 460.500v30" stroke="#d3a76c" stroke-width="0.800"/>

<!-- room labels -->
<g font-size="7.600" fill="#2c2c2c" text-anchor="middle">
<text x="345.600" y="215.500">14.55 м<tspan font-size="3.500" dy="-3.600">²</tspan></text>
<text x="522" y="176.500">16.13 м<tspan font-size="3.500" dy="-3.600">²</tspan></text>
<text x="497.900" y="300">17.38 м<tspan font-size="3.500" dy="-3.600">²</tspan></text>
<text x="345.600" y="361.800">8.31 м<tspan font-size="3.500" dy="-3.600">²</tspan></text>
<text x="563.800" y="363.500">9.82 м<tspan font-size="3.500" dy="-3.600">²</tspan></text>
</g>

</g>

</svg><div class="ovb" style="left:59.300px;top:523px;width:16.200px"><svg style="left:2.300px;top:2px" width="11" height="11" viewBox="0 0 11 11"><circle cx="4.600" cy="4.600" r="3.500" fill="none" stroke="#111" stroke-width="1.200"/><path d="M7.200 7.200l3 3" stroke="#111" stroke-width="1.700" stroke-linecap="round"/><path d="M2.800 4.600h3.600" stroke="#111" stroke-width="1.100"/></svg></div>
<div class="ovb" style="left:77.300px;top:523px;width:16.200px"><svg style="left:2.300px;top:2px" width="11" height="11" viewBox="0 0 11 11"><circle cx="4.600" cy="4.600" r="3.500" fill="none" stroke="#111" stroke-width="1.200"/><path d="M7.200 7.200l3 3" stroke="#111" stroke-width="1.700" stroke-linecap="round"/><path d="M2.800 4.600h3.600M4.600 2.800v3.600" stroke="#111" stroke-width="1.100"/></svg></div>
<div class="ovb" style="left:100.300px;top:523px;width:16.200px"><svg style="left:2.500px;top:2.200px" width="11" height="11" viewBox="0 0 11 11"><path d="M7.300 0.600l3 3-6.800 6.800-3-3z" fill="none" stroke="#111" stroke-width="1.100" stroke-linejoin="round"/><path d="M3 7.900l.900.900M4.400 6.500l1.200 1.200M5.800 5.100l.900.900M7.200 3.700l1.200 1.200" stroke="#111" stroke-width="0.600"/></svg></div>
<div class="ovb" style="left:118.300px;top:523px;width:16.200px"><svg style="left:3px;top:2.800px" width="10" height="9" viewBox="0 0 10 9"><path d="M5 0L0 4.500h1.500V9h2.600V5.800h1.800V9h2.600V4.500H10z" fill="#111"/></svg></div>
<div class="ovb" style="left:136.500px;top:523px;width:44px"><svg style="left:5.200px;top:2.700px" width="9" height="9" viewBox="0 0 9 9"><rect x="0.500" y="0.500" width="8" height="8" fill="none" stroke="#222" stroke-width="0.900"/><path d="M4.500 0.500v8M0.500 4.500h8" stroke="#222" stroke-width="0.900"/></svg><span style="position:absolute;left:16.500px;top:3.600px;font-size:5.700px;line-height:7px;color:#111;white-space:nowrap">Размеры</span></div>
<div class="ovb" style="left:758px;top:522.800px;width:73px;height:15.400px"><svg style="left:6px;top:2.200px" width="11" height="11" viewBox="0 0 11 11"><path d="M5.500 0.300L10.800 3.400 5.500 6.500.200 3.400z" fill="#111"/><path d="M1.500 5.600L.2 6.400l5.300 3.100 5.300-3.100-1.300-.800-4 2.400z" fill="#111"/></svg><span style="position:absolute;left:19.800px;top:3.500px;font-size:5.800px;line-height:7px;color:#111;white-space:nowrap">Работа с этажами</span></div>
<div id="right" style="left:835.5px;width:164.5px">
<div class="tab on" style="left:0;top:3.700px;width:53.600px;height:17.600px;padding-top:4.800px">Проект</div>
<div class="tab" style="left:53.400px;top:5.500px;width:51.600px;height:15.600px;padding-top:3.900px">Этажи</div>
<div class="tab" style="left:104.800px;top:5.500px;width:51.600px;height:15.600px;padding-top:3.900px">Свойства</div>
<div id="rp" style="width:164.500px">
<div class="hd" style="top:2.900px;left:2.200px;width:161px">Дизайн</div>
<div class="db" style="left:5.700px;top:20.100px"><svg viewBox="0 0 19 17"><path d="M2.200 2.900l4-1 11.400 1.300-4 1.200z" fill="#eba193"/><path d="M2.200 2.900L13.600 4.400V15.600L2.200 13.700z" fill="#d15d51"/><path d="M13.600 4.400l4-1.200V16.300l-4-.7z" fill="#ad4038"/><path d="M2.200 5.600l11.400 1.600M2.200 8.300l11.400 1.700M2.200 11l11.400 1.800M5.800 3.400v2.700M9.600 3.900v2.800M4 5.900v2.700M7.800 6.400v2.800M11.600 7v2.700M5.800 8.800v2.800M9.600 9.400v2.800M4 11.300v2.700M7.800 11.900v2.800M11.600 12.500v2.700" stroke="#f0b3a6" stroke-width="0.550" fill="none"/><path d="M13.600 7.200l4-1M13.600 10l4-.9M13.600 12.800l4-.8" stroke="#cf6c60" stroke-width="0.500" fill="none"/></svg><span>Нарисовать<br>стены</span></div>
<div class="db" style="left:58.100px;top:20.100px"><svg viewBox="0 0 19 17"><path d="M2.400 3.600L9.600 1l7.200 3.200v7.600l-7 3.600-7.400-3.400z" fill="#ecd07a"/><path d="M2.400 3.600L9.600 1l7.200 3.200-7 2.500z" fill="#f4ecd0"/><path d="M2.400 3.600l7.400 3.100v8.700l-7.400-3.400z" fill="#e6d8b4"/><path d="M9.800 6.700l7-2.500v7.600l-7 3.600z" fill="#e9c24e"/><path d="M3.600 5.600l3 1.200v2.800l-3-1.300z" fill="#5aa4dd"/><path d="M2.400 11.200l7.400 3.400 7-3.500v1l-7 3.600-7.400-3.500z" fill="#b98e55"/><circle cx="5.600" cy="12.600" r="3.300" fill="#3fbf4a"/><circle cx="5.600" cy="12.600" r="1.700" fill="none" stroke="#e9ffe9" stroke-width="0.900"/></svg><span>Добавить<br>этаж</span></div>
<div class="db" style="left:110.700px;top:20.100px"><svg viewBox="0 0 19 17"><path d="M7.600 3.300L0.300 13.800h9z" fill="#8a5638"/><path d="M7.600 5.600L2.600 12.800h6z" fill="#6e3f28"/><path d="M7.600 3.300h6.800l7.400 10.500-1.400 1.200h-7.200L7.600 5.200 2 13.800H0.300z" fill="#c2413b"/><path d="M8.900 5.200h6.600M10.300 7.200h6.700M11.700 9.200h6.700M13.100 11.200h6.700M14.400 13.200h6.600M10.200 3.300l7.600 11.500M12.600 3.300l7.400 11" stroke="#e27e74" stroke-width="0.450" fill="none"/></svg><span style="top:23.200px">Работать<br>с крышами</span></div>

<div class="db" style="left:5.700px;top:64.900px"><svg viewBox="0 0 19 17"><defs><linearGradient id="gdr" x1="0" y1="0" x2="0" y2="1"><stop offset="0" stop-color="#fff3a8"/><stop offset="1" stop-color="#6fc044"/></linearGradient></defs><rect x="3" y="0.400" width="13.400" height="17" fill="#f29a2e"/><rect x="4.700" y="2.100" width="10" height="15.300" fill="url(#gdr)"/><path d="M8.400 3.600l6.300-1.500v15.300L8.400 15.500z" fill="#e8862a"/><path d="M8.400 3.600l6.300-1.500v15.300" fill="none" stroke="#c96a17" stroke-width="0.500"/><circle cx="9.700" cy="9.900" r="0.700" fill="#7a3d08"/></svg><span>Двери<br>и ворота</span></div>
<div class="db" style="left:58.100px;top:64.900px"><svg viewBox="0 0 19 17"><rect x="2.400" y="1.200" width="14.600" height="14.800" fill="#f4f8fb" stroke="#d6dde3" stroke-width="0.500"/><rect x="3.600" y="2.400" width="5.800" height="2.900" fill="#23a7e6"/><rect x="3.600" y="6.600" width="5.800" height="8.200" fill="#23a7e6"/><rect x="10.600" y="2.400" width="5.200" height="12.400" fill="#23a7e6"/></svg><span>Добавить<br>окно</span></div>
<div class="db" style="left:110.700px;top:64.900px"><svg viewBox="0 0 19 17"><path d="M3.400 15.800V8.200L10.400 1.800l2.600 2.400" fill="none" stroke="#222" stroke-width="0.800"/><path d="M11.800 4.400h5.600v11.400H4.400v-2.900h2.500v-2.800h2.500V7.200h2.400z" fill="#e8862a"/><path d="M11.800 7.200h5.600M9.400 10.100h8M6.900 12.900h10.500" stroke="#8d4a12" stroke-width="0.700" fill="none"/><path d="M11.800 5.500h5.600M9.400 8.400h8M6.900 11.200h10.500M4.400 14.100h13" stroke="#f6b878" stroke-width="0.600" fill="none"/></svg><span>Крыльцо<br>и лестницы</span></div>

<div class="db" style="left:5.700px;top:109.500px"><svg viewBox="0 0 19 17"><path d="M4 6.400Q4 1.600 9.600 1.600q5.800 0 5.800 4.400v5.800H4z" fill="#6eb1e6"/><path d="M5.700 6.600q0-3.200 3.900-3.200 4 0 4 3v2.800H5.700z" fill="#a5d2f3"/><path d="M3.200 7.400q0-1.300 1.300-1.300t1.300 1.300v4.400H3.200zM13.800 7.400q0-1.300 1.300-1.300t1.300 1.300v4.400h-2.600z" fill="#4f97d4"/><path d="M5.400 9.400h8.800v3.400H5.400z" fill="#8cc4ee"/><path d="M3.200 11.800h13.200v1.700H3.200z" fill="#4f97d4"/><path d="M3.900 13.500h1.400v3.300H3.900zM14.300 13.500h1.400v3.300h-1.400z" fill="#f0b73b"/></svg><span style="top:22.600px">Мебель<br>и освещение</span></div>
<div class="db" style="left:58.100px;top:109.500px"><svg viewBox="0 0 19 17"><ellipse cx="10" cy="13" rx="9.600" ry="3" fill="#cfd3d6"/><ellipse cx="10" cy="12.300" rx="8.800" ry="2.500" fill="#eef0f1"/><circle cx="5" cy="8.200" r="3.800" fill="#3f9b35"/><circle cx="10" cy="7" r="4.400" fill="#4aad3c"/><circle cx="15" cy="8.400" r="3.700" fill="#3f9b35"/><circle cx="7.600" cy="10.400" r="2.800" fill="#57b845"/><circle cx="12.600" cy="10.600" r="2.800" fill="#57b845"/><circle cx="6.600" cy="4.800" r="2.100" fill="#f7d84a"/><circle cx="12.800" cy="4" r="2.200" fill="#f7d84a"/><circle cx="9.600" cy="7.600" r="1.600" fill="#f9e27a"/><circle cx="6.600" cy="4.800" r="0.800" fill="#e89a20"/><circle cx="12.800" cy="4" r="0.800" fill="#e89a20"/></svg><span style="top:22.600px">Растения<br>для участка</span></div>
<div class="db" style="left:110.700px;top:109.500px"><svg viewBox="0 0 19 17"><path d="M3.200 1.400h12.600q1.900 0 1.900 1.900 0 1.700-1.700 1.900H3q-1.700-.200-1.700-1.900 0-1.900 1.900-1.900z" fill="#e6e6e6" stroke="#b9b9b9" stroke-width="0.500"/><circle cx="3.400" cy="4.400" r="1.700" fill="#d2d2d2" stroke="#aaa" stroke-width="0.400"/><circle cx="15.600" cy="4.400" r="1.700" fill="#d2d2d2" stroke="#aaa" stroke-width="0.400"/><path d="M4.800 5.400h9.400v1.700H4.800z" fill="#cfcfcf"/><path d="M5.600 7.100h7.800v8.300H5.600z" fill="#ececec"/><path d="M7 7.100v8.300M8.600 7.100v8.300M10.300 7.100v8.300M12 7.100v8.300" stroke="#b5b5b5" stroke-width="0.600"/><path d="M4.600 15.400h9.800v1.200H4.600z" fill="#d4d4d4"/></svg><span style="top:22.600px">Добавить<br>колонну</span></div>

<div class="hd" style="top:154px;height:13.600px;line-height:13.800px"><b class="lh" style="font-size:6.380px">Список объектов (Этаж №1)</b><span class="vs" style="position:absolute;left:113px;top:0;font-weight:normal;font-size:5.600px;color:#222">Вид списка</span><svg style="position:absolute;left:146.300px;top:2.600px" width="9" height="9" viewBox="0 0 9 9"><rect x="0.400" y="0.400" width="8.200" height="8.200" fill="#f6f9fc" stroke="#9aa7b5" stroke-width="0.600"/><path d="M2 2.400h1.400M2 4.500h1.400M2 6.600h1.400" stroke="#3d8a3d" stroke-width="1"/><path d="M4.400 2.400h2.800M4.400 4.500h2.800M4.400 6.600h2.800" stroke="#556" stroke-width="0.700"/></svg></div>
</div>
</div>
<div id="list"><div class="it"><span class="th"><svg viewBox="0 0 16 16"><path d="M1.600 8L11.600 5.400 15.200 7 5.600 10.200z" fill="#cfcfcf"/><path d="M1.600 8l4 2.200v.800L1.600 8.700z" fill="#a9a9a9"/><path d="M5.600 10.200L15.200 7v.700L5.600 11z" fill="#bdbdbd"/></svg></span><span class="t1">Модель прямоугольник горизонта...</span><span class="t2">900.0 x 270.0 x 60.0</span><span class="ey"><svg viewBox="0 0 9 8"><path d="M0.500 4Q4.500 0.900 8.500 4 4.500 7.100.500 4z" fill="#fffdf2" stroke="#d2b65e" stroke-width="0.700"/><circle cx="4.400" cy="4" r="1.700" fill="#5a9c40"/><circle cx="4.200" cy="4" r="0.900" fill="#27501c"/><circle cx="4.900" cy="3.500" r="0.450" fill="#fff"/></svg></span></div><div class="it"><span class="th"><svg viewBox="0 0 16 16"><path d="M1.600 8L11.600 5.400 15.200 7 5.600 10.200z" fill="#cfcfcf"/><path d="M1.600 8l4 2.200v.800L1.600 8.700z" fill="#a9a9a9"/><path d="M5.600 10.200L15.200 7v.700L5.600 11z" fill="#bdbdbd"/></svg></span><span class="t1">Модель прямоугольник горизонта...</span><span class="t2">100.0 x 300.0 x 36.0</span><span class="ey"><svg viewBox="0 0 9 8"><path d="M0.500 4Q4.500 0.900 8.500 4 4.500 7.100.500 4z" fill="#fffdf2" stroke="#d2b65e" stroke-width="0.700"/><circle cx="4.400" cy="4" r="1.700" fill="#5a9c40"/><circle cx="4.200" cy="4" r="0.900" fill="#27501c"/><circle cx="4.900" cy="3.500" r="0.450" fill="#fff"/></svg></span></div><div class="it"><span class="th"><svg viewBox="0 0 16 16"><path d="M1.600 8L11.600 5.400 15.200 7 5.600 10.200z" fill="#cfcfcf"/><path d="M1.600 8l4 2.200v.800L1.600 8.700z" fill="#a9a9a9"/><path d="M5.600 10.200L15.200 7v.700L5.600 11z" fill="#bdbdbd"/></svg></span><span class="t1">Модель прямоугольник горизонта...</span><span class="t2">100.0 x 300.0 x 16.0</span><span class="ey"><svg viewBox="0 0 9 8"><path d="M0.500 4Q4.500 0.900 8.500 4 4.500 7.100.500 4z" fill="#fffdf2" stroke="#d2b65e" stroke-width="0.700"/><circle cx="4.400" cy="4" r="1.700" fill="#5a9c40"/><circle cx="4.200" cy="4" r="0.900" fill="#27501c"/><circle cx="4.900" cy="3.500" r="0.450" fill="#fff"/></svg></span></div><div class="it"><span class="th"><svg viewBox="0 0 16 16"><path d="M1.800 5.200L14.600 3.400v5.800L1.800 12.600z" fill="#d9d9d9"/><path d="M1.800 5.200L14.600 3.400M1.800 7L14.600 5M1.800 8.800L14.600 6.600M1.800 10.600L14.600 8.200M1.800 12.600L14.600 9.200" stroke="#9a9a9a" stroke-width="0.600"/><path d="M1.800 5.200v7.400" stroke="#777" stroke-width="0.900"/><path d="M4 5v7M6.400 4.600v6.800" stroke="#aaa" stroke-width="0.500"/></svg></span><span class="t1">Ограждение</span><span class="t2">300.0 x 4.0 x 100.0</span><span class="ey"><svg viewBox="0 0 9 8"><path d="M0.500 4Q4.500 0.900 8.500 4 4.500 7.100.500 4z" fill="#fffdf2" stroke="#d2b65e" stroke-width="0.700"/><circle cx="4.400" cy="4" r="1.700" fill="#5a9c40"/><circle cx="4.200" cy="4" r="0.900" fill="#27501c"/><circle cx="4.900" cy="3.500" r="0.450" fill="#fff"/></svg></span></div><div class="it"><span class="th"><svg viewBox="0 0 16 16"><path d="M1.800 5.200L14.600 3.400v5.800L1.800 12.600z" fill="#d9d9d9"/><path d="M1.800 5.200L14.600 3.400M1.800 7L14.600 5M1.800 8.800L14.600 6.600M1.800 10.600L14.600 8.200M1.800 12.600L14.600 9.200" stroke="#9a9a9a" stroke-width="0.600"/><path d="M1.800 5.200v7.400" stroke="#777" stroke-width="0.900"/><path d="M4 5v7M6.400 4.600v6.800" stroke="#aaa" stroke-width="0.500"/></svg></span><span class="t1">Ограждение</span><span class="t2">300.0 x 4.0 x 100.0</span><span class="ey"><svg viewBox="0 0 9 8"><path d="M0.500 4Q4.500 0.900 8.500 4 4.500 7.100.500 4z" fill="#fffdf2" stroke="#d2b65e" stroke-width="0.700"/><circle cx="4.400" cy="4" r="1.700" fill="#5a9c40"/><circle cx="4.200" cy="4" r="0.900" fill="#27501c"/><circle cx="4.900" cy="3.500" r="0.450" fill="#fff"/></svg></span></div><div class="it"><span class="th"><svg viewBox="0 0 16 16"><path d="M1.800 5.200L14.600 3.400v5.800L1.800 12.600z" fill="#d9d9d9"/><path d="M1.800 5.200L14.600 3.400M1.800 7L14.600 5M1.800 8.800L14.600 6.600M1.800 10.600L14.600 8.200M1.800 12.600L14.600 9.200" stroke="#9a9a9a" stroke-width="0.600"/><path d="M1.800 5.200v7.400" stroke="#777" stroke-width="0.900"/><path d="M4 5v7M6.400 4.600v6.800" stroke="#aaa" stroke-width="0.500"/></svg></span><span class="t1">Ограждение</span><span class="t2">300.0 x 4.0 x 100.0</span><span class="ey"><svg viewBox="0 0 9 8"><path d="M0.500 4Q4.500 0.900 8.500 4 4.500 7.100.500 4z" fill="#fffdf2" stroke="#d2b65e" stroke-width="0.700"/><circle cx="4.400" cy="4" r="1.700" fill="#5a9c40"/><circle cx="4.200" cy="4" r="0.900" fill="#27501c"/><circle cx="4.900" cy="3.500" r="0.450" fill="#fff"/></svg></span></div><div class="it"><span class="th"><svg viewBox="0 0 16 16"><path d="M1.800 5.200L14.600 3.400v5.800L1.800 12.600z" fill="#d9d9d9"/><path d="M1.800 5.200L14.600 3.400M1.800 7L14.600 5M1.800 8.800L14.600 6.600M1.800 10.600L14.600 8.200M1.800 12.600L14.600 9.200" stroke="#9a9a9a" stroke-width="0.600"/><path d="M1.800 5.200v7.400" stroke="#777" stroke-width="0.900"/><path d="M4 5v7M6.400 4.600v6.800" stroke="#aaa" stroke-width="0.500"/></svg></span><span class="t1">Ограждение</span><span class="t2">300.0 x 4.0 x 100.0</span><span class="ey"><svg viewBox="0 0 9 8"><path d="M0.500 4Q4.500 0.900 8.500 4 4.500 7.100.500 4z" fill="#fffdf2" stroke="#d2b65e" stroke-width="0.700"/><circle cx="4.400" cy="4" r="1.700" fill="#5a9c40"/><circle cx="4.200" cy="4" r="0.900" fill="#27501c"/><circle cx="4.900" cy="3.500" r="0.450" fill="#fff"/></svg></span></div><div class="it"><span class="th"><svg viewBox="0 0 16 16"><ellipse cx="8" cy="4.400" rx="6.600" ry="1.900" fill="#fafafa" stroke="#777" stroke-width="0.600"/><path d="M8 6.300v6" stroke="#444" stroke-width="0.900"/><path d="M6.400 13.300L8 11.300l1.600 2z" fill="#333"/></svg></span><span class="t1">Стол барный круглый</span><span class="t2">98.0 x 98.0 x 69.7</span><span class="ey"><svg viewBox="0 0 9 8"><path d="M0.500 4Q4.500 0.900 8.500 4 4.500 7.100.500 4z" fill="#fffdf2" stroke="#d2b65e" stroke-width="0.700"/><circle cx="4.400" cy="4" r="1.700" fill="#5a9c40"/><circle cx="4.200" cy="4" r="0.900" fill="#27501c"/><circle cx="4.900" cy="3.500" r="0.450" fill="#fff"/></svg></span></div><div class="it"><span class="th"><svg viewBox="0 0 16 16"><path d="M3.600 1.200q1.700-.500 2.300.800l1.300 5.800q1 .800 1.500 1.400l-3.700 1.100q-1.300-1.200-1.600-3z" fill="#fafafa" stroke="#b5b5b5" stroke-width="0.600"/><path d="M5.200 10l-2.400 4.600M5.600 10l.600 5M7.600 9.400l2.600 4.200M6.600 9.600L4.800 13M7 8.600l2.200-2.400" stroke="#666" stroke-width="0.600" fill="none"/></svg></span><span class="t1">Стул Eames</span><span class="t2">41.5 x 47.3 x 93.1</span><span class="ey"><svg viewBox="0 0 9 8"><path d="M0.500 4Q4.500 0.900 8.500 4 4.500 7.100.500 4z" fill="#fffdf2" stroke="#d2b65e" stroke-width="0.700"/><circle cx="4.400" cy="4" r="1.700" fill="#5a9c40"/><circle cx="4.200" cy="4" r="0.900" fill="#27501c"/><circle cx="4.900" cy="3.500" r="0.450" fill="#fff"/></svg></span></div><div class="it"><span class="th"><svg viewBox="0 0 16 16"><path d="M3.600 1.200q1.700-.500 2.300.800l1.300 5.800q1 .800 1.500 1.400l-3.700 1.100q-1.300-1.200-1.600-3z" fill="#fafafa" stroke="#b5b5b5" stroke-width="0.600"/><path d="M5.200 10l-2.400 4.600M5.600 10l.600 5M7.600 9.400l2.600 4.200M6.600 9.600L4.800 13M7 8.600l2.200-2.400" stroke="#666" stroke-width="0.600" fill="none"/></svg></span><span class="t1">Стул Eames</span><span class="t2">41.5 x 47.3 x 93.1</span><span class="ey"><svg viewBox="0 0 9 8"><path d="M0.500 4Q4.500 0.900 8.500 4 4.500 7.100.500 4z" fill="#fffdf2" stroke="#d2b65e" stroke-width="0.700"/><circle cx="4.400" cy="4" r="1.700" fill="#5a9c40"/><circle cx="4.200" cy="4" r="0.900" fill="#27501c"/><circle cx="4.900" cy="3.500" r="0.450" fill="#fff"/></svg></span></div><div class="it"><span class="th"><svg viewBox="0 0 16 16"><path d="M3.600 1.200q1.700-.500 2.300.800l1.300 5.800q1 .800 1.500 1.400l-3.700 1.100q-1.300-1.200-1.600-3z" fill="#fafafa" stroke="#b5b5b5" stroke-width="0.600"/><path d="M5.200 10l-2.400 4.600M5.600 10l.600 5M7.600 9.400l2.600 4.200M6.600 9.600L4.800 13M7 8.600l2.200-2.400" stroke="#666" stroke-width="0.600" fill="none"/></svg></span><span class="t1">Стул Eames</span><span class="t2">41.5 x 47.3 x 93.1</span><span class="ey"><svg viewBox="0 0 9 8"><path d="M0.500 4Q4.500 0.900 8.500 4 4.500 7.100.500 4z" fill="#fffdf2" stroke="#d2b65e" stroke-width="0.700"/><circle cx="4.400" cy="4" r="1.700" fill="#5a9c40"/><circle cx="4.200" cy="4" r="0.900" fill="#27501c"/><circle cx="4.900" cy="3.500" r="0.450" fill="#fff"/></svg></span></div><div class="it"><span class="th"><svg viewBox="0 0 16 16"><path d="M1.400 4.200L13.600 2.400v9L1.400 13.400z" fill="#dcdcdc" stroke="#c2c2c2" stroke-width="0.500"/></svg></span><span class="t1">Модель прямоугольник вертикаль...</span><span class="t2">100.0 x 2.0 x 150.0</span><span class="ey"><svg viewBox="0 0 9 8"><path d="M0.500 4Q4.500 0.900 8.500 4 4.500 7.100.500 4z" fill="#fffdf2" stroke="#d2b65e" stroke-width="0.700"/><circle cx="4.400" cy="4" r="1.700" fill="#5a9c40"/><circle cx="4.200" cy="4" r="0.900" fill="#27501c"/><circle cx="4.900" cy="3.500" r="0.450" fill="#fff"/></svg></span></div><div class="it"><span class="th"><svg viewBox="0 0 16 16"><ellipse cx="7.600" cy="8" rx="6.600" ry="4.600" transform="rotate(-14 7.600 8)" fill="#e2e2e2" stroke="#c4c4c4" stroke-width="0.600"/></svg></span><span class="t1">Модель овал вертикальная</span><span class="t2">100.0 x 2.0 x 100.0</span><span class="ey"><svg viewBox="0 0 9 8"><path d="M0.500 4Q4.500 0.900 8.500 4 4.500 7.100.500 4z" fill="#fffdf2" stroke="#d2b65e" stroke-width="0.700"/><circle cx="4.400" cy="4" r="1.700" fill="#5a9c40"/><circle cx="4.200" cy="4" r="0.900" fill="#27501c"/><circle cx="4.900" cy="3.500" r="0.450" fill="#fff"/></svg></span></div><div class="it"><span class="th"><svg viewBox="0 0 16 16"><path d="M2.600 2.600h10.800q1.500 0 1.500 1.500 0 1.400-1.400 1.500H2.500Q1.100 5.500 1.100 4.100q0-1.500 1.500-1.500z" fill="#e4e4e4" stroke="#b5b5b5" stroke-width="0.500"/><circle cx="2.900" cy="4.800" r="1.400" fill="#d0d0d0" stroke="#aaa" stroke-width="0.400"/><circle cx="13.100" cy="4.800" r="1.400" fill="#d0d0d0" stroke="#aaa" stroke-width="0.400"/><path d="M4.200 5.600h7.600v1.500H4.200z" fill="#cdcdcd"/><path d="M4.800 7.100h6.400v6.600H4.800z" fill="#e9e9e9"/><path d="M6.200 7.100v6.600M8 7.100v6.600M9.800 7.100v6.600" stroke="#b8b8b8" stroke-width="0.500"/><path d="M4 13.700h8v1.100H4z" fill="#d2d2d2"/></svg></span><span class="t1">Колонна 1</span><span class="t2">40.0 x 40.0</span><span class="ey"><svg viewBox="0 0 9 8"><path d="M0.500 4Q4.500 0.900 8.500 4 4.500 7.100.500 4z" fill="#fffdf2" stroke="#d2b65e" stroke-width="0.700"/><circle cx="4.400" cy="4" r="1.700" fill="#5a9c40"/><circle cx="4.200" cy="4" r="0.900" fill="#27501c"/><circle cx="4.900" cy="3.500" r="0.450" fill="#fff"/></svg></span></div></div><div id="sb"><svg style="position:absolute;left:1.900px;top:3px" width="5" height="4" viewBox="0 0 5 4"><path d="M0.500 3l2-2 2 2" fill="none" stroke="#333" stroke-width="1.200"/></svg><i style="top:8.600px;height:22.800px"></i><svg style="position:absolute;left:1.900px;top:282.800px" width="5" height="4" viewBox="0 0 5 4"><path d="M0.500 1l2 2 2-2" fill="none" stroke="#333" stroke-width="1.200"/></svg></div>

</div>
</body></html>
